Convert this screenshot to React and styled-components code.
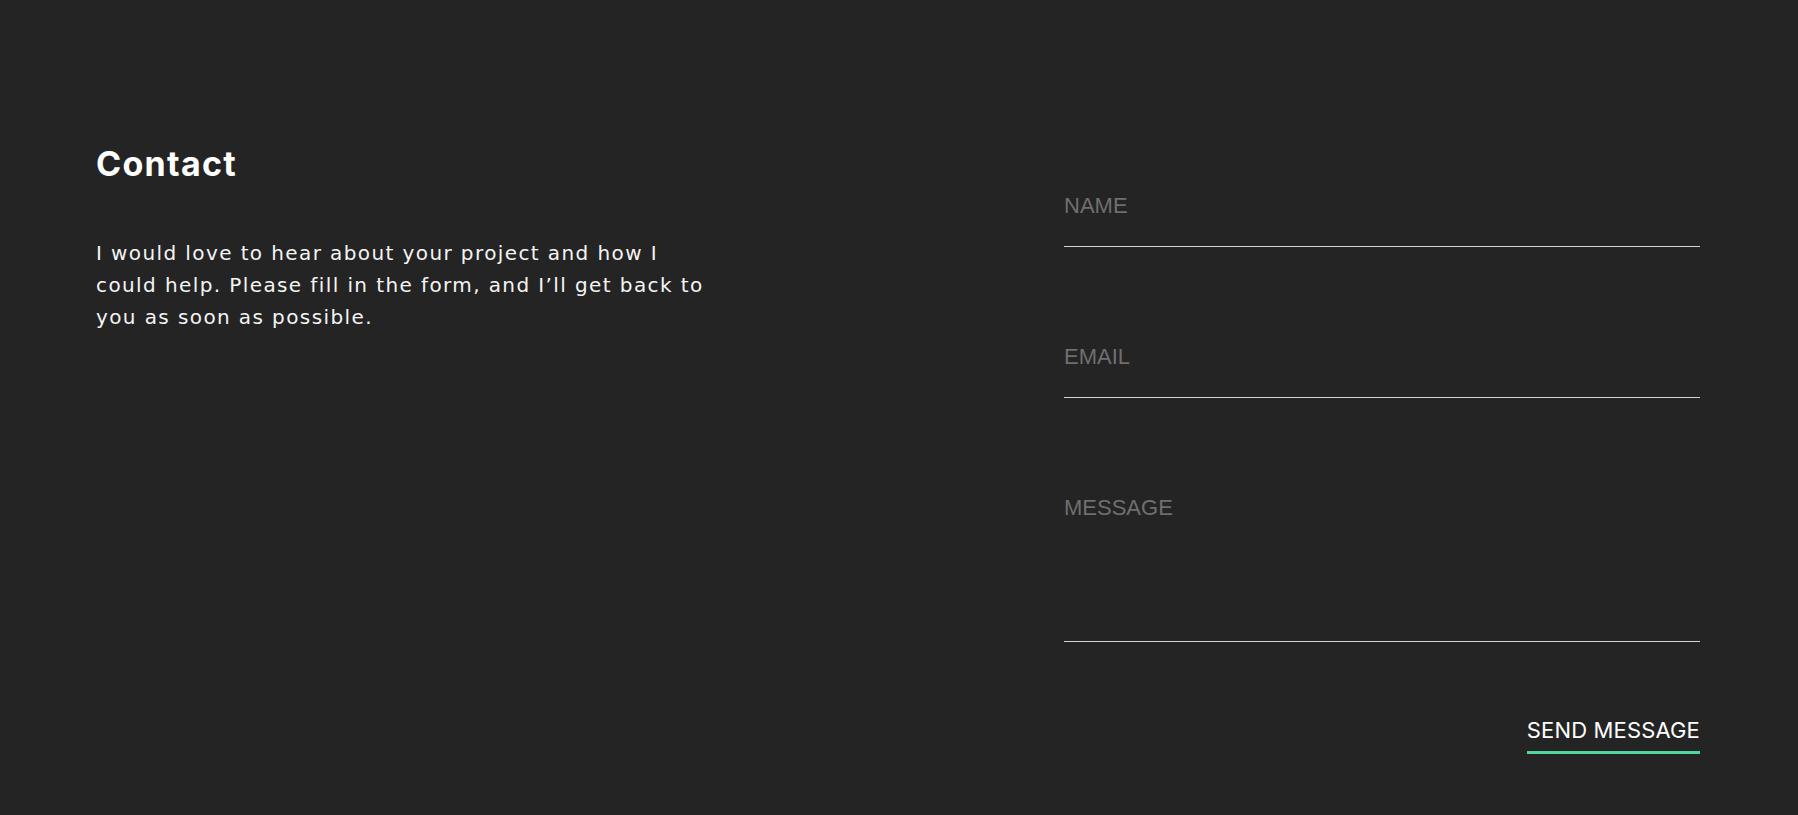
import React from "react";
import styled, { createGlobalStyle } from "styled-components";

const GlobalStyle = createGlobalStyle`
  html, body {
    margin: 0;
    padding: 0;
    background: #242424;
  }
  body {
    font-family: Inter, "Liberation Sans", sans-serif;
    color: #ffffff;
  }
  * { box-sizing: border-box; }
`;

const Page = styled.main`
  min-height: 815px;
  background: #242424;
  display: flex;
  justify-content: space-between;
  align-items: flex-start;
  padding: 0 98px 0 96px;
`;

const Intro = styled.section`
  margin-top: 144px;
  width: 640px;
`;

const Heading = styled.h1`
  margin: 0;
  font-family: Inter, "Liberation Sans", sans-serif;
  font-weight: 700;
  font-size: 34px;
  line-height: 40px;
  color: #ffffff;
  letter-spacing: 1.3px;
`;

const Lead = styled.p`
  margin: 53px 0 0;
  max-width: 620px;
  font-family: "DejaVu Sans", Inter, sans-serif;
  font-weight: 400;
  font-size: 20px;
  line-height: 32px;
  letter-spacing: 1.4px;
  color: #f4f4f4;
`;

const Form = styled.form`
  margin-top: 193px;
  width: 636px;
  display: flex;
  flex-direction: column;
  gap: 97px;
`;

const fieldStyles = `
  display: block;
  width: 100%;
  margin: 0;
  padding: 0 0 27px;
  background: transparent;
  border: none;
  border-bottom: 1px solid #d4d4d4;
  border-radius: 0;
  outline: none;
  color: #ffffff;
  font-family: "Liberation Sans", Arial, sans-serif;
  font-size: 22px;
  line-height: 26px;
  &::placeholder {
    color: #6f6f6f;
    opacity: 1;
  }
`;

const Input = styled.input`
  ${fieldStyles}
  height: 54px;
`;

const TextArea = styled.textarea`
  ${fieldStyles}
  height: 147px;
  resize: none;
`;

const Actions = styled.div`
  display: flex;
  justify-content: flex-end;
  margin-top: -22px;
`;

const SendButton = styled.button`
  background: transparent;
  border: none;
  border-bottom: 3px solid #4fd69c;
  border-radius: 0;
  padding: 0 0 8px;
  margin: 0;
  color: #ffffff;
  font-family: Inter, "Liberation Sans", sans-serif;
  font-weight: 400;
  font-size: 22px;
  line-height: 26px;
  letter-spacing: 0.15px;
  text-transform: uppercase;
  cursor: pointer;
`;

export default function App() {
  return (
    <>
      <GlobalStyle />
      <Page>
        <Intro>
          <Heading>Contact</Heading>
          <Lead>
            I would love to hear about your project and how I could help. Please
            fill in the form, and I’ll get back to you as soon as possible.
          </Lead>
        </Intro>
        <Form onSubmit={(e) => e.preventDefault()}>
          <Input type="text" placeholder="NAME" />
          <Input type="email" placeholder="EMAIL" />
          <TextArea placeholder="MESSAGE" />
          <Actions>
            <SendButton type="submit">Send message</SendButton>
          </Actions>
        </Form>
      </Page>
    </>
  );
}
